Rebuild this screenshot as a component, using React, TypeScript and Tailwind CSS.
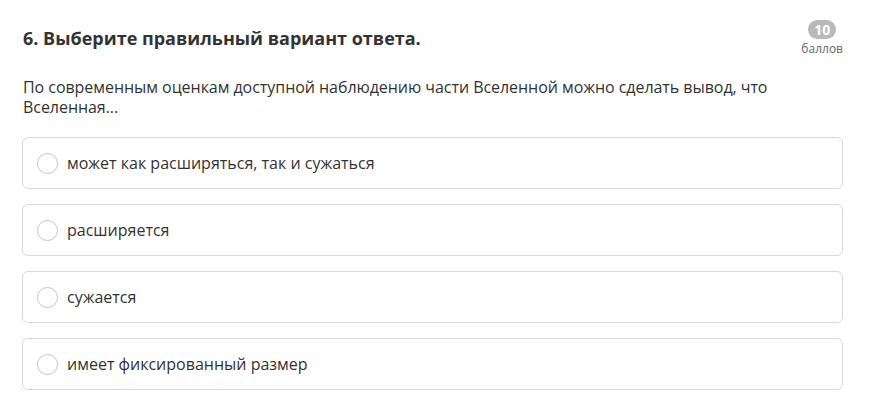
import React from "react";

const options = [
  "может как расширяться, так и сужаться",
  "расширяется",
  "сужается",
  "имеет фиксированный размер",
];

export default function App() {
  return (
    <div
      className="w-[883px] h-[408px] bg-white text-[#333333] overflow-hidden"
      style={{ fontFamily: '"Open Sans", "Noto Sans", sans-serif' }}
    >
      <div className="pl-[23px] pr-[40px] pt-[24px]">
        <div className="flex items-start justify-between">
          <h2 className="text-[18px] leading-[28px] font-bold text-[#333333]">
            6. Выберите правильный вариант ответа.
          </h2>
          <div className="flex flex-col items-center -mt-[4px]">
            <span className="bg-[#b9b9b9] text-white text-[14px] font-bold leading-[17px] rounded-full px-[6px] py-[1px]">
              10
            </span>
            <span className="text-[12px] leading-[17px] mt-[1px] text-[#666666]">баллов</span>
          </div>
        </div>
        <p className="mt-[20px] text-[16px] leading-[20px] text-[#333333] w-[790px] tracking-[-0.05px]">
          По современным оценкам доступной наблюдению части Вселенной можно сделать вывод, что Вселенная...
        </p>
      </div>
      <div className="mt-[20px] ml-[22px] w-[821px] flex flex-col gap-[15px]">
        {options.map((o) => (
          <div
            key={o}
            className="h-[52px] border border-[#d9d9d9] rounded-[6px] flex items-center pl-[14px]"
          >
            <span className="w-[21px] h-[21px] rounded-full border border-[#c4c4c4] shrink-0" />
            <span className="ml-[9px] text-[16px] text-[#333333]">{o}</span>
          </div>
        ))}
      </div>
    </div>
  );
}
